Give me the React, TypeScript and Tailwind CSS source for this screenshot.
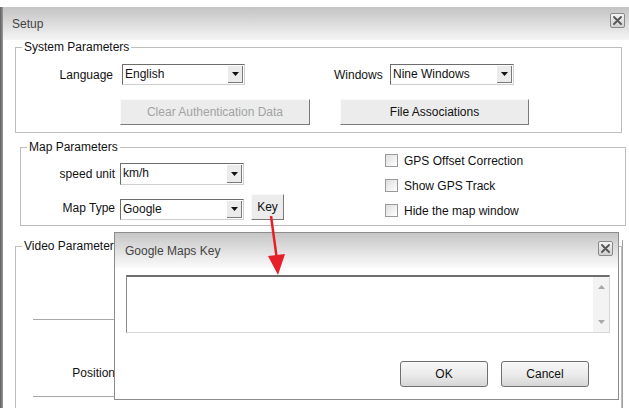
import type { ReactNode } from 'react';

const font = { fontFamily: '"Liberation Sans", Arial, sans-serif' };

function CloseBox() {
  return (
    <div className="flex h-[15px] w-[15px] items-center justify-center rounded-[2px] border border-[#8a8a8a] bg-gradient-to-b from-[#f4f4f4] to-[#cfcfcf]">
      <svg width="9" height="9" viewBox="0 0 9 9">
        <path d="M1 1 L8 8 M8 1 L1 8" stroke="#555" strokeWidth="1.8" strokeLinecap="round" />
      </svg>
    </div>
  );
}

function Select({ value, className }: { value: string; className: string }) {
  return (
    <div
      className={`flex h-[21px] border border-t-[#6d6d6d] border-l-[#6d6d6d] border-r-[#cfcfcf] border-b-[#cfcfcf] bg-white ${className}`}
    >
      <span className="flex-1 truncate pl-[2px] text-[12px] leading-[19px] text-[#111]">{value}</span>
      <div className="m-[1px] flex w-[15px] items-center justify-center border-r border-b border-r-[#7a7a7a] border-b-[#7a7a7a] bg-[#ebebeb]">
        <svg width="7" height="4" viewBox="0 0 7 4">
          <path d="M0 0 H7 L3.5 4 Z" fill="#111" />
        </svg>
      </div>
    </div>
  );
}

function FlatButton({ children, className, disabled }: { children: ReactNode; className: string; disabled?: boolean }) {
  return (
    <div
      className={`flex h-[26px] items-center justify-center border border-t-[#fafafa] border-l-[#fafafa] border-r-[#7a7a7a] border-b-[#7a7a7a] bg-[#ececec] text-[12px] ${
        disabled ? 'text-[#a3a3a3]' : 'text-[#111]'
      } ${className}`}
    >
      {children}
    </div>
  );
}

function RoundButton({ children }: { children: ReactNode }) {
  return (
    <div className="flex h-[26px] w-[88px] items-center justify-center rounded-[3px] border border-[#707070] bg-gradient-to-b from-[#f7f7f7] via-[#ececec] to-[#d6d6d6] text-[12px] text-[#111]">
      {children}
    </div>
  );
}

function Checkbox({ label }: { label: string }) {
  return (
    <div className="flex h-[25px] items-center">
      <div className="h-[13px] w-[13px] border border-[#9a9a9a] bg-gradient-to-br from-[#dedede] to-white" />
      <span className="ml-[6px] text-[12px] text-[#111]">{label}</span>
    </div>
  );
}

function Legend({ children }: { children: ReactNode }) {
  return <legend className="ml-[6px] px-[2px] text-[12px] leading-[14px] text-[#111]">{children}</legend>;
}

export default function App() {
  return (
    <div className="relative h-[408px] w-[629px] overflow-hidden bg-white" style={font}>
      <div className="h-[7px]" />

      {/* Setup window */}
      <div className="flex h-[401px] overflow-hidden">
        <div className="w-[3px] shrink-0 bg-gradient-to-r from-[#5f5f5f] to-[#9a9a9a]" />
        <div className="flex flex-1 flex-col">
          <div className="flex h-[33px] shrink-0 items-start justify-between bg-gradient-to-b from-[#c3c3c3] to-[#f5f5f5] pr-[4px] pl-[9px]">
            <span className="mt-[10px] text-[12px] leading-[14px] text-[#444]">Setup</span>
            <div className="mt-[6px]">
              <CloseBox />
            </div>
          </div>

          <div className="flex shrink-0 flex-col">
            {/* System Parameters */}
            <fieldset className="ml-[12px] w-[607px] shrink-0 border border-[#bdbdbd] pb-[7px]">
              <Legend>System Parameters</Legend>
              <div className="mt-[10px] flex items-center">
                <span className="w-[97px] text-right text-[12px] text-[#111]">Language</span>
                <Select value="English" className="ml-[9px] w-[123px]" />
                <span className="ml-[89px] w-[49px] text-[12px] text-[#111]">Windows</span>
                <Select value="Nine Windows" className="ml-[7px] w-[124px]" />
              </div>
              <div className="mt-[14px] flex">
                <FlatButton className="ml-[104px] w-[190px]" disabled>
                  Clear Authentication Data
                </FlatButton>
                <FlatButton className="ml-[30px] w-[189px]">File Associations</FlatButton>
              </div>
            </fieldset>

            {/* Map Parameters */}
            <fieldset className="mt-[7px] ml-[17px] w-[606px] shrink-0 border border-[#bdbdbd] pb-[5px]">
              <Legend>Map Parameters</Legend>
              <div className="flex items-start">
                <div className="flex flex-col">
                  <div className="mt-[9px] flex items-center">
                    <span className="w-[94px] text-right text-[12px] text-[#111]">speed unit</span>
                    <Select value="km/h" className="ml-[5px] h-[22px] w-[124px]" />
                  </div>
                  <div className="mt-[9px] flex items-end">
                    <span className="mb-[3px] w-[94px] text-right text-[12px] text-[#111]">Map Type</span>
                    <Select value="Google" className="ml-[5px] w-[124px]" />
                    <FlatButton className="ml-[7px] h-[24px] w-[33px]">Key</FlatButton>
                  </div>
                </div>
                <div className="mt-[-6px] mb-[-6px] ml-[101px] flex flex-col">
                  <Checkbox label="GPS Offset Correction" />
                  <Checkbox label="Show GPS Track" />
                  <Checkbox label="Hide the map window" />
                </div>
              </div>
            </fieldset>

            {/* Video Parameters */}
            <fieldset className="mt-[13px] ml-[12px] h-[200px] w-[607px] shrink-0 border border-[#bdbdbd]">
              <Legend>Video Parameters</Legend>
              <div className="mt-[66px] ml-[17px] h-px w-[120px] bg-[#a8a8a8]" />
              <div className="mt-[44px] flex">
                <span className="w-[99px] text-right text-[12px] text-[#111]">Position</span>
              </div>
              <div className="mt-[14px] ml-[17px] h-px w-[120px] bg-[#a8a8a8]" />
            </fieldset>
          </div>
        </div>
      </div>

      {/* Google Maps Key dialog */}
      <div className="absolute top-[232px] left-[114px] flex h-[168px] w-[505px] flex-col border border-[#8c8c8c] bg-white">
        <div className="flex h-[35px] shrink-0 items-start justify-between bg-gradient-to-b from-[#c6c6c6] to-[#fbfbfb] pr-[5px] pl-[10px]">
          <span className="mt-[11px] text-[12px] leading-[14px] text-[#444]">Google Maps Key</span>
          <div className="mt-[8px]">
            <CloseBox />
          </div>
        </div>
        <div className="mt-[7px] ml-[11px] flex h-[58px] w-[484px] shrink-0 border-t-2 border-r border-b border-l border-t-[#6e6e6e] border-r-[#d8d8d8] border-b-[#d8d8d8] border-l-[#8a8a8a] bg-white">
          <div className="flex-1" />
          <div className="flex w-[16px] flex-col items-center justify-between bg-[#f3f3f3] py-[8px]">
            <svg width="7" height="4" viewBox="0 0 7 4">
              <path d="M0 4 H7 L3.5 0 Z" fill="#a8a8a8" />
            </svg>
            <svg width="7" height="4" viewBox="0 0 7 4">
              <path d="M0 0 H7 L3.5 4 Z" fill="#a8a8a8" />
            </svg>
          </div>
        </div>
        <div className="mt-[28px] flex justify-end gap-[13px] pr-[29px]">
          <RoundButton>OK</RoundButton>
          <RoundButton>Cancel</RoundButton>
        </div>
      </div>
      <div className="absolute top-[240px] left-[622px] h-[170px] w-px bg-[#a0a0a0]" />

      {/* red arrow */}
      <svg className="absolute top-0 left-0" width="629" height="408" viewBox="0 0 629 408">
        <path d="M271 216 L277 260" stroke="#e5202b" strokeWidth="2.5" />
        <path d="M268 256 L285 254 L278 275 Z" fill="#e5202b" />
      </svg>
    </div>
  );
}
